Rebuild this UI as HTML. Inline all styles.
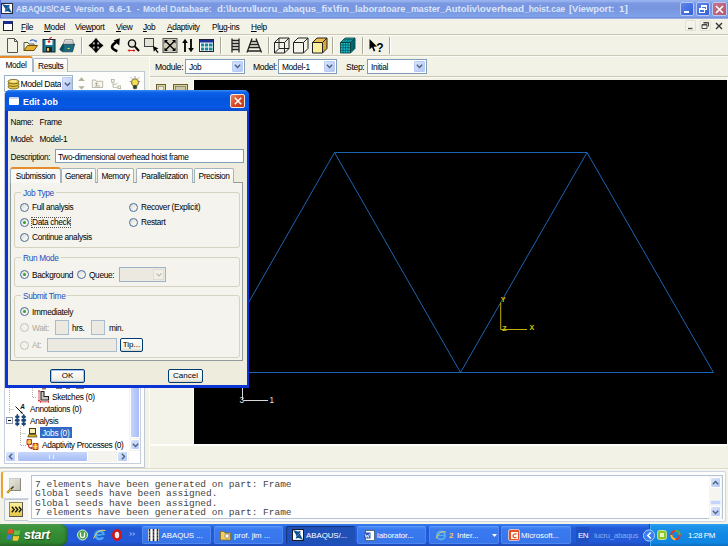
<!DOCTYPE html>
<html><head><meta charset="utf-8">
<style>
*{margin:0;padding:0;box-sizing:border-box}
html,body{width:728px;height:546px;overflow:hidden;background:#f3f2e6}
body{font-family:"Liberation Sans",sans-serif;font-size:8px;color:#000;position:relative}
.a{position:absolute}
.t{position:absolute;white-space:nowrap;line-height:10px;font-size:8.3px;letter-spacing:-0.33px}
u{text-decoration:underline}
#title{left:0;top:0;width:728px;height:19px;background:linear-gradient(#9ab4ee 0,#92aeec 8%,#7b98e2 16%,#7896e0 45%,#7c9fe6 78%,#7fa3ea 86%,#6f88d8 94.7%,#9aaae2 94.8%,#9aaae2 100%)}
.tc{position:absolute;top:3px;white-space:nowrap;font-weight:bold;font-size:9.8px;line-height:12px;color:#dbe5fa;transform-origin:0 0}
#title .txt{left:17px;top:3px;font-weight:bold;font-size:9.8px;line-height:12px;color:#dbe5fa;letter-spacing:0;transform:scaleX(0.950);transform-origin:0 0}
.tb{position:absolute;top:2px;width:14px;height:14px;border-radius:2px;border:1px solid #b9c8f2}
#menubar{left:0;top:19px;width:728px;height:15px;background:#f3f2e6}
#toolbar{left:0;top:34px;width:728px;height:22px;background:#f3f2e6}
.hr{position:absolute;left:0;width:728px;height:1px}
#viewport{left:194px;top:80px;width:533px;height:364px;background:#000}
.combo{position:absolute;height:15px;background:#fff;border:1px solid #7f9db9}
.combo .btn{position:absolute;right:1px;top:1px;width:11px;height:11px;border-radius:1px;background:linear-gradient(135deg,#dbe6fd,#b3c6f3);border:1px solid #b8c9f5}
/* dialog */
#dlg{left:5px;top:90px;width:244px;height:298px;background:#0a34d4;border-radius:5px 5px 0 0}
#dlgtitle{left:0;top:0;width:244px;height:21px;border-radius:5px 5px 0 0;background:linear-gradient(#3c8cf4 0,#0c62e8 12%,#0454dc 45%,#0658e6 80%,#0a4ccc 100%)}
#dlgbody{left:3px;top:21px;width:239px;height:274px;background:#eeecdc}
.radio{position:absolute;width:9px;height:9px;border-radius:50%;border:1px solid #4a6c98;background:linear-gradient(135deg,#dcdcd4,#fff)}
.radio.on::after{content:"";position:absolute;left:2px;top:2px;width:3px;height:3px;border-radius:50%;background:#2fa12f}
.radio.dis{border-color:#c4c3b8;background:#f3f2ea}
.grp{position:absolute;border:1px solid #d5d2c0;border-radius:3px}
.grp .lbl{position:absolute;left:6px;top:-5.5px;background:#f3f2ea;padding:0 2px;color:#1c4fc4;font-size:8.3px;letter-spacing:-0.33px;line-height:10px;white-space:nowrap}
.btnx{position:absolute;height:15px;border:1px solid #003c74;border-radius:2px;background:linear-gradient(#fff,#f0efe6 80%,#d9d6c6);text-align:center;font-size:8px;line-height:12px}
.tab{position:absolute;top:76px;height:14px;border:1px solid #a6b4be;border-bottom:none;border-radius:2px 2px 0 0;background:linear-gradient(#fff,#f1f0e8);font-size:8.3px;letter-spacing:-0.33px;line-height:14px;text-align:center}
/* taskbar */
#taskbar{left:0;top:524px;width:728px;height:22px;background:linear-gradient(#3a80f2 0,#2c6de6 8%,#2359d6 20%,#2259d8 80%,#1c48b6 100%)}
.task{position:absolute;top:2px;height:18px;border-radius:2px;background:linear-gradient(#4a8cf6,#3a7af0 20%,#3674ea);color:#fff;font-size:7.9px;letter-spacing:-0.05px;line-height:19px;padding-left:19.5px;white-space:nowrap;overflow:hidden;box-shadow:inset 0 0 0 1px rgba(255,255,255,.12)}
.task.act{background:#1e50b8;box-shadow:inset 1px 1px 1px rgba(0,0,0,.35)}
.mono{font-family:"Liberation Mono",monospace}
</style></head><body>

<!-- TITLE BAR -->
<div id="title" class="a">
  <svg class="a" style="left:1px;top:3px" width="12" height="11" viewBox="1 3 12 11"><rect x="1.500" y="3.500" width="11" height="10" fill="#fff" stroke="#2a2a3a" stroke-width="1"/><path d="M2 4 L6.800 5.300 L9.500 4.800 L9.300 8 L12 13 L7.800 11.300 L4.800 11.800 L5.200 8.600 Z" fill="#0a5292"/><path d="M5.400 10 L10 5.800" stroke="#fff" stroke-width="0.600" stroke-dasharray="1 0.600"/></svg>
  <span class="tc" style="left:15.7px;transform:scaleX(0.826)">ABAQUS/CAE</span>
<span class="tc" style="left:74.3px;transform:scaleX(0.847)">Version</span>
<span class="tc" style="left:109.4px;transform:scaleX(0.989)">6.6-1</span>
<span class="tc" style="left:136.6px;transform:scaleX(0.735)">-</span>
<span class="tc" style="left:142.6px;transform:scaleX(0.865)">Model</span>
<span class="tc" style="left:169.8px;transform:scaleX(0.890)">Database:</span>
<span class="tc" style="left:216.6px;transform:scaleX(0.978)">d:&#92;lucru&#92;</span>
<span class="tc" style="left:254.4px;transform:scaleX(0.975)">lucru_abaqus_fix</span>
<span class="tc" style="left:333.0px;transform:scaleX(1.092)">&#92;fin_</span>
<span class="tc" style="left:355.0px;transform:scaleX(0.946)">laboratoare</span>
<span class="tc" style="left:405.5px;transform:scaleX(0.906)">_master_</span>
<span class="tc" style="left:444.5px;transform:scaleX(0.964)">Autoliv</span>
<span class="tc" style="left:476.5px;transform:scaleX(1.017)">&#92;overhead</span>
<span class="tc" style="left:523.6px;transform:scaleX(0.862)">_hoist.cae</span>
<span class="tc" style="left:568.8px;transform:scaleX(0.953)">[Viewport:</span>
<span class="tc" style="left:618.6px;transform:scaleX(1.021)">1]</span>
  <div class="tb" style="left:680px;background:linear-gradient(135deg,#5d86ee,#3460da)"><div class="a" style="left:3px;top:8px;width:5px;height:2px;background:#fff"></div></div>
  <div class="tb" style="left:696px;background:linear-gradient(135deg,#5d86ee,#3460da)">
    <div class="a" style="left:4px;top:2px;width:6px;height:5px;border:1px solid #fff;border-top-width:2px"></div>
    <div class="a" style="left:2px;top:5px;width:6px;height:5px;border:1px solid #fff;border-top-width:2px;background:#4570e2"></div></div>
  <div class="tb" style="left:712px;width:15px;background:linear-gradient(135deg,#c8738c,#b4566e)">
    <svg class="a" style="left:2px;top:2px" width="9" height="9" viewBox="0 0 9 9"><path d="M1 1L8 8M8 1L1 8" stroke="#fff" stroke-width="1.6"/></svg></div>
</div>

<div class="a" style="left:0;top:0;width:1px;height:18px;background:#5d72d2"></div>
<!-- MENU BAR -->
<div id="menubar" class="a">
  <div class="a" style="left:3px;top:2px;width:10px;height:10px;border:1px solid #222;border-top:3px solid #1a2f8c;background:#fff"></div>
  <div class="t" style="left:21px;top:2.5px"><u>F</u>ile</div>
  <div class="t" style="left:44px;top:2.5px"><u>M</u>odel</div>
  <div class="t" style="left:75px;top:2.5px">Vie<u>w</u>port</div>
  <div class="t" style="left:116px;top:2.5px"><u>V</u>iew</div>
  <div class="t" style="left:143px;top:2.5px"><u>J</u>ob</div>
  <div class="t" style="left:167px;top:2.5px"><u>A</u>daptivity</div>
  <div class="t" style="left:212px;top:2.5px">Pl<u>u</u>g-ins</div>
  <div class="t" style="left:251px;top:2.5px"><u>H</u>elp</div>
  <svg class="a" style="left:683px;top:0px" width="44" height="14" viewBox="683 19 44 14">
    <rect x="685.500" y="20.500" width="10" height="10" rx="1" fill="#f4f3ea" stroke="#dcd9c8" stroke-width="0.800"/><path d="M688 28.500 H692.500" stroke="#444" stroke-width="1.300"/>
    <rect x="700" y="20.500" width="10.500" height="10" rx="1" fill="#f4f3ea" stroke="#dcd9c8" stroke-width="0.800"/><path d="M703.500 22.500 H708.500 V26.500 M702 24.500 H707 V28.500 H702 Z" stroke="#444" stroke-width="1" fill="none"/><path d="M702 25 H707 M703.500 23 H708.500" stroke="#444" stroke-width="1.200"/>
    <path d="M716 23 L722 29 M722 23 L716 29" stroke="#333" stroke-width="1.400"/>
  </svg>
</div>

<!-- TOOLBAR -->
<div id="toolbar" class="a"></div>
<div class="hr" style="top:34px;background:#cac7b7"></div>
<div class="hr" style="top:35px;background:#fbfaf5"></div>
<div class="hr" style="top:55px;background:#cac7b7"></div>
<div class="hr" style="top:56px;background:#fbfaf5"></div>


<!-- toolbar icons -->
<svg class="a" style="left:0;top:36px" width="400" height="19" viewBox="0 36 400 19">
  <!-- new -->
  <path d="M7.5 38.5 H14.5 L17.5 41.5 V52.5 H7.5 Z" fill="#f4f2e4" stroke="#555" stroke-width="1"/>
  <path d="M14.5 38.5 V41.5 H17.5" fill="none" stroke="#555" stroke-width="1"/>
  <!-- open -->
  <path d="M24 50.5 V42.5 H28 L29 44 H34 V46" fill="#f8f4d0" stroke="#555" stroke-width="1"/>
  <path d="M24 50.5 L27.5 45.5 H37.5 L34 50.5 Z" fill="#e8b030" stroke="#6a5010" stroke-width="1"/>
  <path d="M30 41 Q33 38.5 36 41.5" fill="none" stroke="#3a6ad0" stroke-width="1.2"/>
  <path d="M34.5 41.8 L36.6 42.6 L36.8 40 Z" fill="#3a6ad0"/>
  <!-- save -->
  <rect x="43" y="39.5" width="12" height="12.5" fill="#1a7890" stroke="#123" stroke-width="1"/>
  <rect x="45.5" y="40" width="7" height="5" fill="#fff"/>
  <rect x="46" y="47" width="6" height="5" fill="#222"/>
  <rect x="47" y="48" width="2" height="3" fill="#e8c840"/>
  <path d="M52 37.5 Q49 37.5 49 42" stroke="#e02020" stroke-width="1.2" fill="none"/>
  <path d="M47.3 41 L50.7 41 L49 43.5 Z" fill="#e02020"/>
  <!-- print -->
  <path d="M63 44 H74.700 L72.500 51.800 H62.500 L59.800 49.500 Z" fill="#1c6c80" stroke="#0c3440" stroke-width="0.700"/>
  <path d="M63 44 L59.800 49.500 L62.500 51.800 L64.500 47 Z" fill="#0e4c5c"/>
  <path d="M63.300 44 L64.800 39.700 H72.500 L73.600 44 Z" fill="#fafafa" stroke="#666" stroke-width="0.700"/>
  <path d="M65.200 41.300 H72.500 M64.800 42.700 H73" stroke="#999" stroke-width="0.600"/>
  <rect x="67.500" y="48" width="2.200" height="1" fill="#e8d040"/>
  <!-- sep -->
  <path d="M81.5 37 V54" stroke="#aca899"/><path d="M82.5 37 V54" stroke="#fff"/>
  <!-- pan -->
  <path d="M96 38.300 L99.300 42.300 H97.100 V44.400 H99.200 V42.200 L103.200 45.500 L99.200 48.800 V46.600 H97.100 V48.700 H99.300 L96 52.700 L92.700 48.700 H94.900 V46.600 H92.800 V48.800 L88.800 45.500 L92.800 42.200 V44.400 H94.900 V42.300 H92.700 Z" fill="#000" stroke="#000" stroke-width="0.500" stroke-linejoin="round"/>
  <!-- rotate -->
  <path d="M117.300 51.300 Q107.500 47.500 116 42.300" fill="none" stroke="#000" stroke-width="2.700"/>
  <path d="M113.500 40.500 L119.700 38.300 L119.300 45.600 Z" fill="#000"/>
  <!-- zoom -->
  <circle cx="132" cy="43.5" r="3.6" fill="#e8e6da" stroke="#000" stroke-width="1.4"/>
  <path d="M134.8 46.3 L139 51" stroke="#000" stroke-width="2"/>
  <path d="M128 50.5 H135" stroke="#e02020" stroke-width="1"/>
  <path d="M127.5 50.5 L129.5 49 V52 Z M135.5 50.5 L133.5 49 V52 Z" fill="#e02020"/>
  <!-- box zoom -->
  <rect x="144.5" y="38.5" width="9" height="8" fill="#e4e2d4" stroke="#444" stroke-width="1"/>
  <path d="M153 46 L158.5 48.5 L156.3 49.3 L158.6 52.2 L157.4 53 L155.3 50 L153.8 51.8 Z" fill="#000"/>
  <!-- fit -->
  <rect x="163" y="38.5" width="14" height="14" fill="#cfccba" stroke="#555" stroke-width="1"/>
  <path d="M165 40.5 L175 50.5 M175 40.5 L165 50.5" stroke="#000" stroke-width="1.3"/>
  <path d="M164.5 40 H168 L164.5 43.5 Z M175.5 40 H172 L175.5 43.5 Z M164.5 51 H168 L164.5 47.5 Z M175.5 51 H172 L175.5 47.5 Z" fill="#000"/>
  <!-- updown -->
  <path d="M185 52 V41" stroke="#000" stroke-width="1.8"/><path d="M182.2 43 L185 38.8 L187.8 43 Z" fill="#000"/>
  <path d="M191 39 V50" stroke="#000" stroke-width="1.8"/><path d="M188.2 48 L191 52.2 L193.8 48 Z" fill="#000"/>
  <!-- table -->
  <rect x="199.5" y="39.5" width="14" height="12" fill="#fff" stroke="#223" stroke-width="1"/>
  <rect x="200" y="40" width="13" height="2.5" fill="#1c2f9a"/>
  <g fill="#1a8a9a"><rect x="201" y="43.5" width="3.2" height="3"/><rect x="205" y="43.5" width="3.2" height="3"/><rect x="209" y="43.5" width="3.5" height="3"/><rect x="201" y="47.5" width="3.2" height="3"/><rect x="205" y="47.5" width="3.2" height="3"/><rect x="209" y="47.5" width="3.5" height="3"/></g>
  <!-- sep -->
  <path d="M220.5 37 V54" stroke="#aca899"/><path d="M221.5 37 V54" stroke="#fff"/>
  <!-- ladder -->
  <path d="M232 38.5 V52.5 M239 38.5 V52.5 M232 40.5 H239 M232 43.5 H239 M232 46.5 H239 M232 49.5 H239" stroke="#222" stroke-width="1.3" fill="none"/>
  <!-- persp ladder -->
  <path d="M252 38.5 L247 52.5 M256 38.5 L261.5 52.5 M251 41.5 H257.5 M250 44.5 H258.5 M249 47.5 H260 M247.5 51 H261" stroke="#222" stroke-width="1.3" fill="none"/>
  <!-- sep -->
  <path d="M268.5 37 V54" stroke="#aca899"/><path d="M269.5 37 V54" stroke="#fff"/>
  <!-- wire cube -->
  <g stroke="#222" stroke-width="1" fill="none">
    <path d="M274.5 42.5 H284.5 V53 H274.5 Z M279 38 H289 V48.5 H279 Z M274.5 42.5 L279 38 M284.5 42.5 L289 38 M284.5 53 L289 48.5 M274.5 53 L279 48.5"/>
  </g>
  <!-- hidden cube -->
  <g stroke="#222" stroke-width="1">
    <path d="M293.5 42.5 L298 38 H308 V48.5 L303.5 53 H293.5 Z" fill="#f6f4ea"/>
    <path d="M293.5 42.5 H303.5 V53 M303.5 42.5 L308 38" fill="none"/>
  </g>
  <!-- shaded cube -->
  <g stroke="#222" stroke-width="1">
    <path d="M312.5 42.5 H322.5 V53 H312.5 Z" fill="#fbf0a0"/>
    <path d="M312.5 42.5 L317 38 H327 L322.5 42.5 Z" fill="#f0c050"/>
    <path d="M322.5 42.5 L327 38 V48.5 L322.5 53 Z" fill="#d8a838"/>
  </g>
  <!-- sep -->
  <path d="M332.5 37 V54" stroke="#aca899"/><path d="M333.5 37 V54" stroke="#fff"/>
  <!-- mesh cube -->
  <g stroke="#033" stroke-width="0.8">
    <path d="M340.5 42.5 H350.5 V53 H340.5 Z" fill="#18b8c8"/>
    <path d="M340.5 42.5 L345 38 H355 L350.5 42.5 Z" fill="#20c8d8"/>
    <path d="M350.5 42.5 L355 38 V48.5 L350.5 53 Z" fill="#0e8a98"/>
    <path d="M343 42.5 V53 M345.5 42.5 V53 M348 42.5 V53 M340.5 45 H350.5 M340.5 47.7 H350.5 M340.5 50.4 H350.5 M352 41 V51.5 M353.5 39.5 V50 M350.5 45 L355 40.5 M350.5 47.7 L355 43.2 M350.5 50.4 L355 45.9 M342 41 H352 M343.5 39.5 H353.5 M343 42.5 L347.5 38 M345.5 42.5 L350 38 M348 42.5 L352.5 38" fill="none" stroke-width="0.5"/>
  </g>
  <!-- sep -->
  <path d="M362.5 37 V54" stroke="#aca899"/><path d="M363.5 37 V54" stroke="#fff"/>
  <!-- arrow ? -->
  <path d="M369.5 39 L369.5 49.5 L372 47.3 L373.8 51.5 L375.3 50.8 L373.6 46.8 L377 46.5 Z" fill="#000"/>
  <text x="376.3" y="51.500" font-family="Liberation Sans" font-weight="bold" font-size="12" fill="#000">?</text>
  <!-- sep -->
  <path d="M389.5 37 V54" stroke="#aca899"/><path d="M390.5 37 V54" stroke="#fff"/>
</svg>

<!-- module row -->
<div class="t" style="left:155px;top:62px;font-size:8.6px">Module:</div>
<div class="combo" style="left:185px;top:59px;width:60px"><div class="t" style="left:3px;top:2px">Job</div><div class="btn"><svg class="a" style="left:1px;top:2px" width="7" height="5" viewBox="0 0 7 5"><path d="M0.8 0.8L3.5 3.5L6.2 0.8" stroke="#4d6185" stroke-width="1.4" fill="none"/></svg></div></div>
<div class="t" style="left:253px;top:62px;font-size:8.6px">Model:</div>
<div class="combo" style="left:278px;top:59px;width:59px"><div class="t" style="left:3px;top:2px">Model-1</div><div class="btn"><svg class="a" style="left:1px;top:2px" width="7" height="5" viewBox="0 0 7 5"><path d="M0.8 0.8L3.5 3.5L6.2 0.8" stroke="#4d6185" stroke-width="1.4" fill="none"/></svg></div></div>
<div class="t" style="left:346px;top:62px;font-size:8.6px">Step:</div>
<div class="combo" style="left:367px;top:59px;width:60px"><div class="t" style="left:3px;top:2px">Initial</div><div class="btn"><svg class="a" style="left:1px;top:2px" width="7" height="5" viewBox="0 0 7 5"><path d="M0.8 0.8L3.5 3.5L6.2 0.8" stroke="#4d6185" stroke-width="1.4" fill="none"/></svg></div></div>
<div class="a" style="left:149px;top:76px;width:579px;height:1px;background:#cbc8b8"></div>
<div class="a" style="left:149px;top:77px;width:579px;height:1px;background:#fbfaf6"></div>


<!-- LEFT PANEL -->
<div class="a" style="left:0;top:71px;width:145px;height:397px;border:1px solid #c0c8d2;border-left:none;background:#fdfdfc"></div>
<div class="a" style="left:4px;top:93px;width:137px;height:371px;border:1px solid #c4cedc;background:#fff"></div>
<div class="a" style="left:33px;top:58px;width:35px;height:14px;border:1px solid #a8b8c4;border-bottom:none;border-radius:2px 2px 0 0;background:linear-gradient(#fff,#f1f0e8)"><div class="t" style="left:4px;top:2px">Results</div></div>
<div class="a" style="left:0;top:56px;width:33px;height:16px;border:1px solid #a8b8c4;border-left:none;border-bottom:none;border-top:2px solid #e68b2c;border-radius:0 3px 0 0;background:#fdfdfc"><div class="t" style="left:5.5px;top:2px">Model</div></div>
<!-- model db combo -->
<div class="a" style="left:4px;top:75px;width:69px;height:17px;border:1px solid #9cb2c8;background:#fff"></div>
<svg class="a" style="left:7px;top:77px" width="13" height="13" viewBox="0 0 13 13"><g stroke="#4a3a08" stroke-width="0.7" fill="#e8c840"><ellipse cx="6.5" cy="9.8" rx="5.5" ry="2.2"/><ellipse cx="6.5" cy="7.2" rx="5.5" ry="2.2"/><ellipse cx="6.5" cy="4.6" rx="5.5" ry="2.2"/></g><ellipse cx="6.5" cy="4.3" rx="3.5" ry="1.1" fill="#f8eca0"/></svg>
<div class="t" style="left:20.500px;top:78.500px;font-size:8.600px;width:40.500px;overflow:hidden">Model Datat</div>
<div class="a" style="left:62px;top:77px;width:10px;height:14px;border-radius:1px;background:linear-gradient(135deg,#dbe6fd,#b3c6f3);border:1px solid #b8c9f5"><svg class="a" style="left:0.5px;top:4px" width="7" height="5" viewBox="0 0 7 5"><path d="M0.8 0.8L3.5 3.5L6.2 0.8" stroke="#4d6185" stroke-width="1.4" fill="none"/></svg></div>
<svg class="a" style="left:76px;top:74px" width="68" height="18" viewBox="76 74 68 18">
  <path d="M78.200 81 L81.500 77.300 L84.800 81 Z M78.200 86.200 L81.500 89.500 L84.800 86.200 Z" fill="#b4b19c"/>
  <path d="M92.300 87.500 V80 H95.500 L96.500 81.300 H102.700 V87.500 Z" fill="#f7f6f0" stroke="#b6b3a0" stroke-width="0.900"/>
  <path d="M95 86 H100 M96.500 86 V82.800 M95 84.200 L96.500 82.600 L98 84.200" stroke="#aaa794" stroke-width="0.900" fill="none"/>
  <g stroke="#b0ad9a" stroke-width="0.800" fill="#fafaf6"><rect x="111.500" y="79.500" width="2.600" height="2.600"/><rect x="118" y="86" width="2.600" height="2.600"/><path d="M113 82.100 V87.300 H118 M113 84.300 H116 L117.500 83" fill="none"/></g>
  <path d="M131.800 84 Q130.600 79.200 135 78.800 Q139.400 79.200 138.200 84 L137.200 85.600 H132.800 Z" fill="#f2dc50" stroke="#4a4420" stroke-width="0.800"/>
  <rect x="133.300" y="85.800" width="3.400" height="3" rx="0.800" fill="#2a4a2a" stroke="#1a2a1a" stroke-width="0.500"/>
  <path d="M135 76.300 V77.600 M131 77.500 L131.900 78.500 M139 77.500 L138.100 78.500 M129.800 81.500 H130.800 M139.200 81.500 H140.200" stroke="#556" stroke-width="0.800"/>
</svg>
<!-- tree scrollbars -->
<div class="a" style="left:129px;top:94px;width:11px;height:357px;background:#f4f3ee"></div>
<div class="a" style="left:130px;top:94px;width:10px;height:344px;background:linear-gradient(90deg,#c8d6fb,#b5c8f8 50%,#a8bdf5);border:1px solid #fff;border-radius:1px"></div>
<div class="a" style="left:130px;top:439px;width:10px;height:11px;border-radius:2px;background:linear-gradient(135deg,#dbe6fd,#b3c6f3);border:1px solid #fff"><svg class="a" style="left:0.5px;top:3px" width="7" height="5" viewBox="0 0 7 5"><path d="M0.8 0.8L3.5 3.5L6.2 0.8" stroke="#4d6185" stroke-width="1.4" fill="none"/></svg></div>
<div class="a" style="left:5px;top:451px;width:124px;height:11px;background:#f4f3ee"></div>
<div class="a" style="left:5px;top:451px;width:11px;height:11px;border-radius:2px;background:linear-gradient(135deg,#dbe6fd,#b3c6f3);border:1px solid #fff"><svg class="a" style="left:2px;top:1px" width="5" height="7" viewBox="0 0 5 7"><path d="M4.2 0.8L1.500 3.500L4.2 6.2" stroke="#4d6185" stroke-width="1.4" fill="none"/></svg></div>
<div class="a" style="left:17px;top:451px;width:71px;height:11px;border-radius:2px;background:linear-gradient(#c8d6fb,#b5c8f8 50%,#a8bdf5);border:1px solid #fff"><div class="a" style="left:31px;top:3px;width:5px;height:4px;border-left:1px solid #eef3ff;border-right:1px solid #eef3ff"></div></div>
<div class="a" style="left:117px;top:451px;width:11px;height:11px;border-radius:2px;background:linear-gradient(135deg,#dbe6fd,#b3c6f3);border:1px solid #fff"><svg class="a" style="left:3px;top:1px" width="5" height="7" viewBox="0 0 5 7"><path d="M0.8 0.8L3.500 3.500L0.8 6.2" stroke="#4d6185" stroke-width="1.4" fill="none"/></svg></div>
<!-- tree -->
<svg class="a" style="left:5px;top:388px" width="124" height="63" viewBox="5 388 124 63">
  <g stroke="#a8a8a0" stroke-width="0.900" stroke-dasharray="1 1" fill="none">
    <path d="M9.500 388 V413 M9.500 409.500 H14 M32.500 388 V397.500 H37 M20.500 426 V445.500 H26 M20.500 433.500 H26"/>
  </g>
  <!-- partially hidden row -->
  <rect x="42" y="388" width="4" height="1.500" fill="#b07038"/>
  <path d="M56 388.500 H62 M66 388.500 H70 M76 388.500 H84" stroke="#555" stroke-width="0.800"/>
  <!-- sketches icon -->
  <path d="M41 391.500 H44 V396.500 H48.500 V400 H41 Z" fill="#c8c8c0" stroke="#222" stroke-width="1.100"/>
  <path d="M39 390.500 V401.800 M38 391 H40 M38 400.500 H40 M40 401.800 H49 M40.500 400.800 V402.800 M48.500 400.800 V402.800" stroke="#d82828" stroke-width="0.800" fill="none"/>
  <!-- annotations icon -->
  <path d="M15.500 406.500 L22.500 413.500" stroke="#111" stroke-width="1"/><path d="M20.300 413 L22.800 413.800 L22 411.300 Z" fill="#111"/>
  <text x="20.300" y="408.800" font-family="Liberation Sans" font-weight="bold" font-style="italic" font-size="6.500" fill="#111">A</text>
  <!-- analysis -->
  <rect x="6.500" y="417.500" width="6" height="6" fill="#fff" stroke="#8a97ae" stroke-width="1"/><path d="M8 420.500 H11" stroke="#000" stroke-width="1.100"/>
  <g fill="#1d4878"><ellipse cx="17.300" cy="416.800" rx="2.300" ry="1.500"/><ellipse cx="17.300" cy="420.300" rx="2.600" ry="1.700"/><ellipse cx="17.300" cy="423.800" rx="2.300" ry="1.500"/><ellipse cx="23.700" cy="416.800" rx="2.300" ry="1.500"/><ellipse cx="23.700" cy="420.300" rx="2.600" ry="1.700"/><ellipse cx="23.700" cy="423.800" rx="2.300" ry="1.500"/></g>
  <path d="M17.300 414 V426.300 M23.700 414 V426.300" stroke="#1d4878" stroke-width="1.200"/>
  <!-- jobs icon -->
  <rect x="29.500" y="428.500" width="6" height="5" fill="#f4ecb0" stroke="#4a3c08" stroke-width="1"/><path d="M27.800 437 H37 L36 434.500 H28.800 Z" fill="#d8b030" stroke="#4a3c08" stroke-width="0.700"/>
  <!-- adaptivity icon -->
  <path d="M27 439.500 H31.500 V444.500 H27 Z" fill="#f0a828" stroke="#b02810" stroke-width="0.900"/><path d="M27 442 H31.500 M29.200 439.500 V444.500" stroke="#fff2c0" stroke-width="0.500"/>
  <path d="M28.500 445 Q28.500 448.500 32 448" stroke="#d02020" stroke-width="1.200" fill="none"/><path d="M31 446.600 L33 448 L31 449.400 Z" fill="#d02020"/>
  <path d="M33 443.500 H38 V449.500 H33 Z" fill="#f0a828" stroke="#b02810" stroke-width="0.900"/><path d="M33 446.500 H38 M35.500 443.500 V449.500" stroke="#fff2c0" stroke-width="0.500"/>
</svg>
<div class="t" style="left:52px;top:392px">Sketches (0)</div>
<div class="t" style="left:30px;top:404px">Annotations (0)</div>
<div class="t" style="left:30px;top:416px">Analysis</div>
<div class="a" style="left:40px;top:427px;width:32px;height:11px;background:#316ac5"></div>
<div class="t" style="left:42px;top:428px;color:#fff">Jobs (0)</div>
<div class="t" style="left:42px;top:440px">Adaptivity Processes (0)</div>

<!-- left/right divider & toolbox -->
<div class="a" style="left:149px;top:57px;width:1px;height:411px;background:#fdfdfa"></div>
<div class="a" style="left:150px;top:78px;width:43px;height:366px;background:#f4f3ea"></div>
<div class="a" style="left:193px;top:78px;width:1px;height:367px;background:#fbfaf6"></div>
<svg class="a" style="left:154px;top:81px" width="38" height="10" viewBox="154 82 38 10">
  <rect x="156.500" y="85.500" width="9" height="8" fill="#d8d090" stroke="#6a6030" stroke-width="1"/><rect x="158.500" y="87.500" width="5" height="6" fill="#e8e6da" stroke="#888" stroke-width="0.600"/>
  <rect x="173.500" y="85.500" width="14" height="8" fill="#d8d090" stroke="#6a6030" stroke-width="1"/><rect x="175.500" y="87.500" width="10" height="6" fill="#c8c4a8" stroke="#666" stroke-width="0.600"/>
</svg>
<!-- viewport bottom border -->
<div class="a" style="left:149px;top:444px;width:579px;height:1px;background:#fbfaf6"></div>
<div class="a" style="left:727px;top:78px;width:1px;height:366px;background:#fff"></div>
<div class="a" style="left:150px;top:444px;width:578px;height:2px;background:#fdfdfa"></div>
<div class="a" style="left:0;top:468px;width:728px;height:1px;background:#dcdacc"></div>
<div class="a" style="left:0;top:469px;width:728px;height:1px;background:#fbfaf6"></div>

<!-- MESSAGE AREA -->
<div class="a" style="left:27px;top:471px;width:699px;height:51px;border:1px solid #ccd6e6;border-radius:2px;background:#fcfcfd"></div>
<div class="a" style="left:4px;top:499px;width:24px;height:22px;border:1px solid #bcc8d4;border-right:none;border-radius:2px 0 0 2px;background:#f5f4ee"></div>
<div class="a" style="left:1px;top:471px;width:28px;height:28px;border:1px solid #ccd6e6;border-left:2px solid #f0a030;border-right:none;border-radius:3px 0 0 3px;background:#fcfcfd"></div>
<div class="a" style="left:9px;top:478px;width:12px;height:13px;background:linear-gradient(135deg,#e8e6da,#c4c1ae);border:1px solid #888;border-left-color:#ccc;border-top-color:#ccc"></div>
<svg class="a" style="left:6px;top:484px" width="10" height="10" viewBox="0 0 10 10"><path d="M1.200 8.800 L5 5" stroke="#b08818" stroke-width="2.400"/><path d="M1.200 8.800 L5 5" stroke="#e8c850" stroke-width="0.800"/><path d="M5 5 L7.500 2.500" stroke="#333" stroke-width="1.400"/></svg>
<div class="a" style="left:9px;top:502px;width:14px;height:15px;background:linear-gradient(#faf0a0,#f0d860 60%,#e4c848);border:1px solid #555;border-left-color:#8a8460;border-top-color:#8a8460"></div>
<svg class="a" style="left:11px;top:506px" width="11" height="7" viewBox="0 0 11 7"><path d="M0.800 0.800 L3.200 3.500 L0.800 6.200 M4.300 0.800 L6.700 3.500 L4.300 6.200 M7.800 0.800 L10.200 3.500 L7.800 6.200" stroke="#111" stroke-width="1.300" fill="none"/></svg>
<div class="a" style="left:31px;top:475px;width:692px;height:44px;background:#fff;border:1px solid #b4c4d8"></div>
<div class="t mono" id="m1" style="left:35px;top:480px;font-size:9.500px;line-height:10px;letter-spacing:0;color:#444">7 elements have been generated on part: Frame</div>
<div class="t mono" style="left:35px;top:489px;font-size:9.500px;line-height:10px;letter-spacing:0;color:#444">Global seeds have been assigned.</div>
<div class="t mono" style="left:35px;top:498.500px;font-size:9.500px;line-height:10px;letter-spacing:0;color:#444">Global seeds have been assigned.</div>
<div class="t mono" style="left:35px;top:508px;font-size:9.500px;line-height:10px;letter-spacing:0;color:#444">7 elements have been generated on part: Frame</div>
<!-- msg scrollbar -->
<div class="a" style="left:709px;top:476px;width:13px;height:43px;background:#f6f5f0"></div>
<div class="a" style="left:710px;top:477px;width:11px;height:11px;border-radius:2px;background:linear-gradient(135deg,#dbe6fd,#b3c6f3);border:1px solid #fff"><svg class="a" style="left:1px;top:2px" width="7" height="5" viewBox="0 0 7 5"><path d="M0.8 4.200L3.500 1.500L6.200 4.200" stroke="#4d6185" stroke-width="1.400" fill="none"/></svg></div>
<div class="a" style="left:710px;top:506px;width:11px;height:11px;border-radius:2px;background:linear-gradient(135deg,#dbe6fd,#b3c6f3);border:1px solid #fff"><svg class="a" style="left:1px;top:3px" width="7" height="5" viewBox="0 0 7 5"><path d="M0.8 0.800L3.500 3.500L6.200 0.800" stroke="#4d6185" stroke-width="1.400" fill="none"/></svg></div>
<div class="a" style="left:710px;top:500px;width:11px;height:5px;border-radius:2px;background:#c3d3fa;border:1px solid #e8eefc"></div>

<!-- VIEWPORT -->
<div id="viewport" class="a">
<svg width="533" height="364" viewBox="194 80 533 364" style="position:absolute;left:0;top:0">
  <g stroke="#1b64b4" stroke-width="1" fill="none">
    <path d="M208.5 372.5 L334.5 152.5 L587 152.5 L713.5 372.5 Z"/>
    <path d="M334.5 152.5 L460.5 372.5 L587 152.5"/>
  </g>
  <g stroke="#c0b000" stroke-width="1" fill="none"><path d="M500.7 302.5 L500.7 329.5 L527 329.5"/></g>
  <g fill="#c8b800" font-family="Liberation Mono" font-weight="bold" font-size="8"><text x="500.8" y="301.5">Y</text><text x="529.6" y="329.8">X</text><text x="502" y="331">Z</text></g>
  <g stroke="#d8d8d8" stroke-width="1" fill="none"><path d="M242.5 388 L242.5 400 M243.5 400.5 L268 400.5"/></g>
  <g fill="#e0e0e0" font-family="Liberation Sans" font-size="8.2"><text x="239.500" y="403">3</text><text x="269.500" y="403">1</text></g>
</svg>
</div>

<!-- TASKBAR -->
<div id="taskbar" class="a">
  <!-- start -->
  <div class="a" style="left:0;top:0;width:68px;height:22px;border-radius:0 8px 8px 0;background:linear-gradient(#5aa95a 0,#3f973f 10%,#358c35 45%,#2f862f 80%,#2a6e2a 100%);box-shadow:inset -2px 0 3px rgba(0,0,0,.25)"></div>
  <svg class="a" style="left:6px;top:4px" width="15" height="14" viewBox="-0.5 0 12.8 12"><path d="M1.500 1.500 Q3.500 0.300 5.800 1.500 L5 5.300 Q3 4.300 0.700 5.300 Z" fill="#e8502a"/><path d="M6.800 1.800 Q9 3 11.800 1.800 L11 5.600 Q8.500 6.600 6 5.600 Z" fill="#6cc04a"/><path d="M0.500 6.300 Q2.800 5.300 4.800 6.300 L4 10.200 Q2 9.200 -0.200 10.200 Z" fill="#3a78e8"/><path d="M5.800 6.600 Q8.300 7.600 10.800 6.600 L10 10.500 Q7.500 11.500 5 10.500 Z" fill="#f4c830"/></svg>
  <div class="t" style="left:24px;top:4px;font-size:12.500px;line-height:14px;font-weight:bold;font-style:italic;color:#fff;letter-spacing:-0.300px;text-shadow:1px 1px 1px rgba(0,0,0,.4)">start</div>
  <!-- quick launch -->
  <svg class="a" style="left:76px;top:4px" width="62" height="14" viewBox="76 4 62 14">
    <circle cx="82.500" cy="11" r="5" fill="#4aa84a" stroke="#d8f0d8" stroke-width="1"/><path d="M80.500 8.500 V11.500 Q80.500 13.500 82.500 13.500 Q84.500 13.500 84.500 11.500 V8.500" stroke="#fff" stroke-width="1.200" fill="none"/>
    <circle cx="99.500" cy="11" r="4" fill="none" stroke="#4aa8f4" stroke-width="2.600"/><path d="M96 11 H103.500" stroke="#4aa8f4" stroke-width="1.800"/><path d="M101 12.200 H104.500 V14" stroke="#2359d6" stroke-width="1.800" fill="none"/><path d="M93.500 14.500 Q98 4.500 105.500 6.500" stroke="#f4d850" stroke-width="1" fill="none"/>
    <ellipse cx="117" cy="11" rx="3.600" ry="4.600" fill="#f0f0f0" stroke="#d01818" stroke-width="2.800"/><path d="M113 14 L121 14" stroke="#801010" stroke-width="0" />
    <path d="M130 8.500 L131.500 10 L130 11.500 M133 8.500 L134.500 10 L133 11.500" stroke="#dfe8ff" stroke-width="0.800" fill="none"/>
  </svg>
  <!-- tasks -->
  <div class="task" style="left:142px;width:69px">ABAQUS ...</div>
  <svg class="a" style="left:148px;top:5px" width="11" height="12" viewBox="0 0 11 12"><rect x="0" y="0" width="11" height="12" fill="#fff"/><path d="M1.500 0 V12 M5.500 0 V12 M9.500 0 V12" stroke="#222" stroke-width="1.600"/><path d="M0 3 H11 M0 6 H11 M0 9 H11" stroke="#fff" stroke-width="0.500"/></svg>
  <div class="task" style="left:214px;width:69px;padding-left:20px">prof. jim ...</div>
  <svg class="a" style="left:220px;top:6px" width="12" height="11" viewBox="0 0 12 11"><path d="M0.500 10 V1.500 H4 L5 3 H10.500 V10 Z" fill="#f0d060" stroke="#8a6a10" stroke-width="0.800"/><circle cx="7" cy="6" r="2.200" fill="#fff" stroke="#666" stroke-width="0.700"/></svg>
  <div class="task act" style="left:286px;width:69px;padding-left:20px">ABAQUS/...</div>
  <svg class="a" style="left:292px;top:5px" width="12" height="12" viewBox="1 3 12 11" preserveAspectRatio="none"><rect x="1.500" y="3.500" width="11" height="10" fill="#fff" stroke="#1a1a2a" stroke-width="1"/><path d="M2 4 L6.800 5.300 L9.500 4.800 L9.300 8 L12 13 L7.800 11.300 L4.800 11.800 L5.200 8.600 Z" fill="#0a5292"/><path d="M5.400 10 L10 5.800" stroke="#fff" stroke-width="0.600" stroke-dasharray="1 0.600"/></svg>
  <div class="task" style="left:357px;width:69px;padding-left:20px">laborator...</div>
  <svg class="a" style="left:364px;top:6px" width="11" height="11" viewBox="0 0 11 11"><rect x="1.500" y="0.500" width="9" height="10" fill="#fff" stroke="#456" stroke-width="0.800"/><rect x="0" y="2.500" width="6.500" height="6" fill="#2a58b8"/><path d="M1 3.800 L2.200 7.500 L3.200 5 L4.300 7.500 L5.500 3.800" stroke="#fff" stroke-width="0.800" fill="none"/></svg>
  <div class="task" style="left:429px;width:70px;padding-left:20px"><span style="color:#f8c850;font-weight:bold;margin-right:1.500px">2</span> Inter...</div>
  <svg class="a" style="left:435px;top:5px" width="12" height="12" viewBox="0 0 12 12"><circle cx="6" cy="6.500" r="4" fill="none" stroke="#58b0f0" stroke-width="1.900"/><path d="M3 6.500 H9.500" stroke="#58b0f0" stroke-width="1.300"/><path d="M1 9.500 Q5 1 11 3" stroke="#f0d040" stroke-width="0.900" fill="none"/></svg>
  <svg class="a" style="left:492px;top:10px" width="5" height="3" viewBox="0 0 5 3"><path d="M0 0 H5 L2.500 3 Z" fill="#fff"/></svg>
  <div class="task" style="left:501px;width:70px;padding-left:20px">Microsoft...</div>
  <svg class="a" style="left:508px;top:5px" width="12" height="12" viewBox="0 0 12 12"><rect x="0.500" y="0.500" width="11" height="11" rx="1.500" fill="#e85020" stroke="#fff" stroke-width="0.600"/><rect x="3" y="3" width="7" height="7" fill="#fff"/><path d="M8.500 5 Q5 4.500 5 7 Q5 9 8.500 8.500" stroke="#e85020" stroke-width="1.300" fill="none"/></svg>
  <div class="a" style="left:576px;top:3px;width:13px;height:16px;background:#1f50c4"></div><div class="t" style="left:578px;top:7px;color:#fff;font-size:8px;letter-spacing:-0.500px">EN</div>
  <div class="t" style="left:594px;top:7px;color:#86acec;font-size:8px">lucru_abaqus</div>
  <!-- tray -->
  <div class="a" style="left:649px;top:0;width:79px;height:22px;background:linear-gradient(#2ea4f0 0,#1c94ea 10%,#1288e4 50%,#1086e2 85%,#0c6cc0 100%);border-left:1px solid #0e4a9a;box-shadow:inset 1px 0 0 #3ab0f4"></div>
  <svg class="a" style="left:643px;top:4px" width="42" height="14" viewBox="643 4 42 14">
    <circle cx="649" cy="11.500" r="5.600" fill="#3a80f2" stroke="#a8ccfa" stroke-width="1"/><path d="M650.800 8.500 L647.800 11.500 L650.800 14.500" stroke="#fff" stroke-width="1.600" fill="none"/>
    <rect x="657.500" y="6.500" width="9" height="9" rx="2" fill="#8ac830" stroke="#dff0a0" stroke-width="0.800"/><rect x="660" y="9" width="4" height="4" fill="#e8f4c0"/>
    <circle cx="675.500" cy="11" r="4.200" fill="none" stroke="#e03828" stroke-width="2"/><path d="M675.500 6.800 A4.200 4.200 0 0 1 679.700 11" stroke="#50c040" stroke-width="2" fill="none"/><path d="M671.300 11 A4.200 4.200 0 0 0 675.500 15.200" stroke="#f0c030" stroke-width="2" fill="none"/>
  </svg>
  <div class="t" style="left:688px;top:7px;color:#fff;font-size:8px;letter-spacing:-0.400px">1:28 PM</div>
</div>

<!-- DIALOG -->
<div id="dlg" class="a">
  <div id="dlgtitle" class="a">
    <div class="a" style="left:4px;top:7px;width:10px;height:8px;background:#fff;border-top:2px solid #c9d8f6;border-radius:1px"></div>
    <div class="t" id="dt" style="left:18px;top:6px;font-weight:bold;font-size:9.8px;line-height:12px;color:#fff;letter-spacing:0;transform:scaleX(0.9);transform-origin:0 0">Edit Job</div>
    <div class="a" style="left:225px;top:4px;width:15px;height:14px;border:1px solid #f4e4dc;border-radius:2px;background:linear-gradient(135deg,#e8896a,#d64a24 50%,#c23a18)">
      <svg class="a" style="left:2.500px;top:2px" width="8" height="8" viewBox="0 0 8 8"><path d="M0.8 0.8L7.2 7.2M7.2 0.8L0.8 7.2" stroke="#fff" stroke-width="1.5"/></svg></div>
  </div>
  <div id="dlgbody" class="a"><div class="a" style="left:0;top:-21px;width:238px;height:295px">
    <div class="t" style="left:2.5px;top:27px">Name:</div><div class="t" style="left:31.500px;top:27px">Frame</div>
    <div class="t" style="left:2.5px;top:44px">Model:</div><div class="t" style="left:31.500px;top:44px">Model-1</div>
    <div class="t" style="left:2.5px;top:61.5px">Description:</div>
    <div class="a" style="left:47px;top:59px;width:189px;height:14px;background:#fff;border:1px solid #7f9db9"><div class="t" style="left:2px;top:1.5px">Two-dimensional overhead hoist frame</div></div>
    <!-- tab page -->
    <div class="a" style="left:2px;top:92px;width:233px;height:179px;border:1px solid #919b9c;background:#f4f3ee"></div>
    <div class="tab" style="left:53px;width:35px;top:78px;height:15px">General</div>
    <div class="tab" style="left:89px;width:37px;top:78px;height:15px">Memory</div>
    <div class="tab" style="left:128px;width:57px;top:78px;height:15px">Parallelization</div>
    <div class="tab" style="left:186px;width:40px;top:78px;height:15px">Precision</div>
    <div class="tab" style="left:2px;width:51px;top:77px;height:16px;background:#f8f8f4;border-top:2px solid #e68b2c;border-radius:3px 3px 0 0;line-height:15px">Submission</div>
    <!-- Job Type -->
    <div class="grp" style="left:6px;top:102px;width:226px;height:56px"><div class="lbl">Job Type</div></div>
    <div class="radio" style="left:12px;top:112.5px"></div><div class="t" style="left:24px;top:112px">Full analysis</div>
    <div class="radio on" style="left:12px;top:127.5px"></div><div class="t" style="left:24px;top:127px">Data check</div>
    <div class="a" style="left:23px;top:127px;width:40px;height:11px;border:1px dotted #555"></div>
    <div class="radio" style="left:12px;top:142.5px"></div><div class="t" style="left:24px;top:142px">Continue analysis</div>
    <div class="radio" style="left:121px;top:112.5px"></div><div class="t" style="left:133px;top:112px">Recover (Explicit)</div>
    <div class="radio" style="left:121px;top:127.5px"></div><div class="t" style="left:133px;top:127px">Restart</div>
    <!-- Run Mode -->
    <div class="grp" style="left:6px;top:147px;width:226px;height:30px;top:167px"><div class="lbl">Run Mode</div></div>
    <div class="radio on" style="left:12px;top:180px"></div><div class="t" style="left:24px;top:179.5px">Background</div>
    <div class="radio" style="left:69px;top:180px"></div><div class="t" style="left:81px;top:179.5px">Queue:</div>
    <div class="a" style="left:111px;top:177px;width:47px;height:15px;border:1px solid #9fb3c8;background:#ebe9e0"><div class="a" style="right:1px;top:1px;width:11px;height:11px;background:#f0efe8;border:1px solid #e0ded2"><svg class="a" style="left:2px;top:3px" width="6" height="4" viewBox="0 0 6 4"><path d="M0.5 0.5L3 3L5.5 0.5" stroke="#c0beb0" stroke-width="1.2" fill="none"/></svg></div></div>
    <!-- Submit Time -->
    <div class="grp" style="left:6px;top:205px;width:226px;height:63px"><div class="lbl">Submit Time</div></div>
    <div class="radio on" style="left:12px;top:217px"></div><div class="t" style="left:24px;top:216.5px">Immediately</div>
    <div class="radio dis" style="left:12px;top:233px"></div><div class="t" style="left:24px;top:232.5px;color:#aca899">Wait:</div>
    <div class="a" style="left:47px;top:230px;width:14px;height:15px;border:1px solid #a9bccf;background:#ebe9e0"></div>
    <div class="t" style="left:64px;top:232.5px">hrs.</div>
    <div class="a" style="left:83px;top:230px;width:14px;height:15px;border:1px solid #a9bccf;background:#ebe9e0"></div>
    <div class="t" style="left:101px;top:232.5px">min.</div>
    <div class="radio dis" style="left:12px;top:250.5px"></div><div class="t" style="left:24px;top:249.5px;color:#aca899">At:</div>
    <div class="a" style="left:39px;top:248px;width:70px;height:14px;border:1px solid #a9bccf;background:#ebe9e0"></div>
    <div class="btnx" style="left:112px;top:248px;width:23px;height:14px;line-height:11px">Tip...</div>
    <div class="btnx" style="left:42px;top:259px;width:35px;top:279px;height:14px;box-shadow:inset 0 0 0 1px #a9c3f0">OK</div>
    <div class="btnx" style="left:160px;top:279px;width:35px;height:14px">Cancel</div>
  </div></div>
</div>

</body></html>
